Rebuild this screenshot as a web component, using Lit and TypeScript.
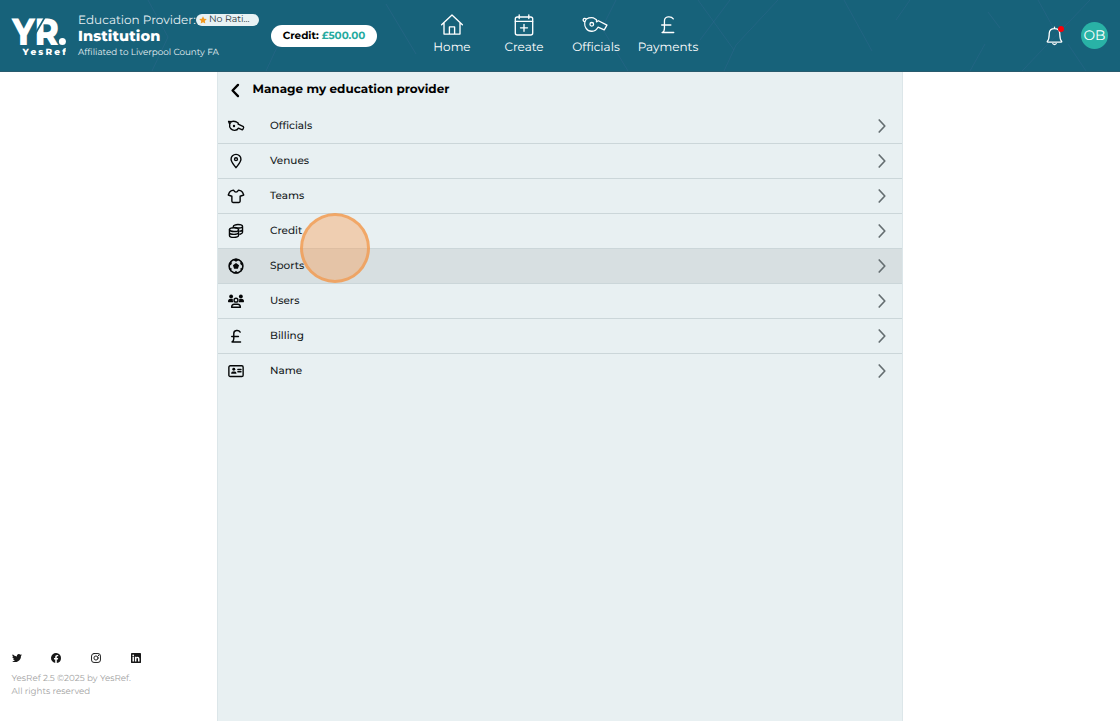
import { LitElement, html, svg, css } from "lit";
import { customElement, property } from "lit/decorators.js";

const whistle = svg`<path d="M3.5 4.2A1.8 1.8 0 1 0 2.6 7.3M4 4.4Q7 2.8 11 3.2L14.4 5.3V7.4L16.4 6.3 25.3 10.9 22.5 15.7 16 13C13 18.5 6.5 18.3 3.6 14.2C1.5 11.2 1.8 7 4 4.4Z"/><circle cx="9.5" cy="10" r="1.9"/>`;
const pound = svg`<path d="M19.5 4.8C17.5 1.8 10.3 1.5 10.3 7V14.5Q10.3 18 7.8 19H20M7.4 11.2H17"/>`;

const icons: Record<string, unknown> = {
  home: svg`<path d="M1.6 11.5 12 1.6 22.4 11.5M4 9.8V20.8H20V9.8M9.4 20.8V13.6H14.6V20.8"/>`,
  create: svg`<rect x="3.3" y="3.2" width="17.4" height="18" rx="2"/><path d="M3.3 7.5H20.7M7.2 1V4.8M16.8 1V4.8M12 10.5V17.5M8.5 14H15.5"/>`,
  whistle,
  pound,
  smallWhistle: svg`<path d="M2.9 8.3 1.2 4.1 5.2 4.6Q8.5 3 12.4 4.6L15.6 6.6V8.2L23.4 12Q24.4 13 22.9 15.5L21.8 16.8 16 14.2C13.6 18.6 7.3 18.4 4.6 15.2C2.7 13 2.3 10.6 2.9 8.3Q3.6 6 5.2 4.6"/><circle class="solid" cx="9.3" cy="11" r="1.8"/>`,
  bell: svg`<path d="M4 18.4C6 16.2 5.8 13.5 6 9.5C6.2 6 8.4 4.1 12 4.1S17.8 6 18 9.5C18.2 13.5 18 16.2 20 18.4Q20.8 19.5 19.6 19.5H4.4Q3.2 19.5 4 18.4ZM12 4V2.4M10 21.3Q12 23.2 14 21.3"/>`,
  pin: svg`<path d="M12 22C9 17.8 4.6 13.8 4.6 9.5A7.4 7.4 0 0 1 19.4 9.5C19.4 13.8 15 17.8 12 22Z"/><circle cx="12" cy="9.3" r="2.2"/>`,
  shirt: svg`<path d="M8.2 3.2 4.5 4.4Q2 5.5 .4 10.5L5.8 12.4V20Q5.8 21.7 7.5 21.7H16.5Q18.2 21.7 18.2 20V12.4L23.6 10.5Q22 5.5 19.5 4.4L15.8 3.2Q12 9.3 8.2 3.2Z"/>`,
  coins: svg`<ellipse cx="9" cy="10" rx="6.8" ry="2.8"/><path d="M2.2 10V18.7C2.2 22.6 15.8 22.6 15.8 18.7V10M2.2 14.3C2.2 18 15.8 18 15.8 14.3M8 6.2V5.2C8 1.4 21.8 1.4 21.8 5.2V14Q21.8 16 18 16.8M10 6.7Q21.8 8.8 21.8 5.2M18 12.3Q21.8 11.4 21.8 9.7"/>`,
  ball: svg`<circle cx="12" cy="12" r="9.4"/><path class="solid" d="M12 7.6 16.2 10.7 14.6 15.6H9.4L7.8 10.7ZM7 3 12 6 17 3 12 1.6ZM2 12.4 6.2 8.9 5.6 4.6 2 8.4ZM22 12.4 17.8 8.9 18.4 4.6 22 8.4ZM4.6 19.6 6.3 15.3 1.8 14.1ZM19.4 19.6 17.7 15.3 22.2 14.1ZM8.3 22 12 18.2 15.7 22Z"/>`,
  users: svg`<circle cx="12" cy="10.7" r="2.9"/><path d="M5.4 21.4Q5.7 16.8 9.3 16.8H14.7Q18.3 16.8 18.6 21.4Z"/><path class="solid" d="M0 12.9Q0 8.7 4 8.7H6.2Q7.7 8.7 7.2 10.5 7 12 8 13.8H.8Q0 13.8 0 12.9ZM24 12.9Q24 8.7 20 8.7H17.8Q16.3 8.7 16.8 10.5 17 12 16 13.8H23.2Q24 13.8 24 12.9Z"/><circle class="solid" cx="4.7" cy="5.1" r="2.9"/><circle class="solid" cx="19.3" cy="5.1" r="2.9"/>`,
  card: svg`<rect x="1.3" y="4.2" width="21.4" height="16" rx="2"/><path d="M14.8 9.7H19.5M14.8 13.2H19.5"/><circle class="solid" cx="8.7" cy="9.4" r="2.2"/><path class="solid" d="M4.6 16.2Q4.8 12.6 7 12.6H10.4Q12.6 12.6 12.8 16.2Z"/>`,
  back: svg`<path d="M16 3 7.3 12 16 21"/>`,
  next: svg`<path d="M7.8 3 16.2 12 7.8 21"/>`,
  star: svg`<path class="solid" d="M12 1 15.4 8.2 23.2 9.2 17.5 14.7 18.9 22.5 12 18.7 5.1 22.5 6.5 14.7 .8 9.2 8.6 8.2Z"/>`,
  twitter: svg`<path class="solid" d="M23.9 4.6a10 10 0 0 1-2.8.8 5 5 0 0 0 2.1-2.7 10 10 0 0 1-3.1 1.2 4.9 4.9 0 0 0-8.4 4.5A14 14 0 0 1 1.6 3.2a4.9 4.9 0 0 0 1.5 6.5 5 5 0 0 1-2.2-.6 4.9 4.9 0 0 0 4 4.9 5 5 0 0 1-2.3.1 4.9 4.9 0 0 0 4.6 3.4A9.9 9.9 0 0 1 0 19.5 14 14 0 0 0 21.5 7.1a10 10 0 0 0 2.4-2.5Z"/>`,
  facebook: svg`<path class="solid" d="M24 12A12 12 0 1 0 10.1 23.9V15.5H7.1V12H10.1V9.4C10.1 6.4 11.9 4.7 14.7 4.7Q16 4.7 17.3 5V8H15.8C14.3 8 13.9 8.9 13.9 9.8V12H17.2L16.7 15.5H13.9V23.9A12 12 0 0 0 24 12Z"/>`,
  instagram: svg`<rect x="1.3" y="1.3" width="21.4" height="21.4" rx="6"/><circle cx="12" cy="12" r="5"/><circle class="solid" cx="18.2" cy="5.8" r="1.4"/>`,
  linkedin: svg`<path class="solid" fill-rule="evenodd" d="M2 0H22Q24 0 24 2V22Q24 24 22 24H2Q0 24 0 22V2Q0 0 2 0ZM3.6 9V20.4H7.1V9ZM5.3 3.3A2.1 2.1 0 1 0 5.3 7.5 2.1 2.1 0 0 0 5.3 3.3ZM9.4 9V20.4H12.9V14.8C12.9 11 16.8 11 16.8 14.8V20.4H20.4V14.1C20.4 8 14.7 7.6 12.8 10.6V9Z"/>`,
};

@customElement("line-icon")
class LineIcon extends LitElement {
  @property() name = "";
  @property() box = "0 0 24 24";
  static styles = css`
    :host { display: block; flex: none; }
    svg { display: block; width: 100%; height: 100%; overflow: visible; fill: none; stroke: currentColor; stroke-width: var(--line, 1.5); stroke-linecap: round; stroke-linejoin: round; }
    .solid { fill: currentColor; stroke: none; }
  `;
  render() {
    return html`<svg viewBox=${this.box} aria-hidden="true">${icons[this.name]}</svg>`;
  }
}

const nav = [
  ["home", "Home", "0 -0.3 24 24"],
  ["create", "Create", "0 -0.8 24 24"],
  ["whistle", "Officials", "1.4 -1.8 25 25"],
  ["pound", "Payments", "1.5 -1.3 25 25"],
];
const rows = [
  ["smallWhistle", "Officials", "0.3 -1 24 24"],
  ["pin", "Venues", "0 0 24 24"],
  ["shirt", "Teams", "0 0 24 24"],
  ["coins", "Credit", "0 0 24 24"],
  ["ball", "Sports", "1 0.8 22 22"],
  ["users", "Users", "0 0 24 24"],
  ["pound", "Billing", "2 -1 23 23"],
  ["card", "Name", "0 0 24 24"],
];

@customElement("app-root")
class AppRoot extends LitElement {
  static styles = css`
    :host { display: flex; flex-direction: column; height: 721px; overflow: hidden; position: relative; background: #fff; color: #14191b; font-family: Montserrat, Inter, sans-serif; white-space: nowrap; text-rendering: geometricPrecision; }
    * { box-sizing: border-box; }
    header { height: 72px; flex: none; display: grid; grid-template-columns: 66px 193px 157px 288px 1fr; color: #fff; background: #17627a; position: relative; border-bottom: 1px solid #285b6e; }
    .pattern { position: absolute; inset: 0; width: 1120px; height: 71px; }
    header > div, nav { position: relative; }
    .logo svg { display: block; width: 66px; height: 60px; fill: #fff; font-family: Montserrat, Inter, sans-serif; }
    .who { padding: 12px 0 0 12px; }
    .line { display: flex; align-items: center; height: 16px; }
    .kind { font-size: 12px; font-weight: 400; line-height: 14px; padding-top: 2px; color: #e6eff2; width: 119px; }
    .rating { display: flex; align-items: center; gap: 2px; width: 63px; height: 12px; padding-left: 3px; flex: none; border-radius: 6px; background: #e8f2f4; color: #29363a; font-size: 9.4px; line-height: 14px; }
    .rating line-icon { width: 8px; height: 8px; color: #f39a20; }
    .org { font-size: 14.5px; font-weight: 800; letter-spacing: .1px; height: 17px; line-height: 17px; }
    .aff { font-size: 8.8px; font-weight: 400; color: #e6eff2; height: 14px; line-height: 16px; }
    .credit { display: flex; padding: 25px 0 0 12px; }
    .pill { height: 22px; width: 106px; border-radius: 11px; background: #fff; color: #000; text-align: center; font-size: 10.4px; line-height: 22px; font-weight: 700; }
    .pill span { color: #25aa9f; }
    nav { display: grid; grid-template-columns: repeat(4, 72px); padding-top: 13px; }
    nav a { display: flex; flex-direction: column; align-items: center; font-size: 12px; font-weight: 450; line-height: 16px; gap: 3px; }
    nav line-icon { width: 24px; height: 24px; --line: 1.35; }
    .account { display: flex; justify-content: flex-end; align-items: center; gap: 16px; padding-right: 12px; }
    .bell { position: relative; }
    .bell line-icon { width: 21px; height: 21px; }
    .dot { position: absolute; right: 1px; top: 1px; width: 6px; height: 6px; border-radius: 50%; background: #fa0009; }
    .avatar { width: 27px; height: 27px; border-radius: 50%; background: #29b2a6; text-align: center; line-height: 28px; font-size: 13.8px; }
    .body { flex: 1; display: grid; grid-template-columns: 217px 686px 217px; }
    aside { display: flex; flex-direction: column; justify-content: flex-end; padding: 0 0 22px 11.5px; color: #a3a3a3; font-size: 8.75px; line-height: 13px; }
    .social { display: flex; gap: 29.8px; padding-bottom: 10px; color: #181818; }
    .social line-icon { width: 10px; height: 10px; --line: 2.3; }
    main { background: #e8f0f2; border: 1px solid #dce6e9; border-width: 0 1px; }
    h1 { display: flex; align-items: center; gap: 10px; height: 37px; margin: 0; padding: 0 0 0 9.5px; color: #000; font-size: 12px; line-height: 14px; font-weight: 700; }
    h1 span { padding-bottom: 1px; }
    h1 line-icon { width: 15px; height: 15px; --line: 3.7; }
    .row { display: grid; grid-template-columns: 42px 1fr 16px; align-items: center; height: 34.94px; padding: 0 12px 0 10px; border-bottom: 1px solid #cbd6d9; font-size: 10.45px; line-height: 13px; font-weight: 500; }
    .row span { padding-bottom: .4px; }
    .row:last-child { border-bottom: 0; height: 34px; }
    .row line-icon { width: 16px; height: 16px; --line: 2.1; color: #050708; }
    .row .next { color: #646d70; --line: 2.5; }
    .active { background: #d7dfe1; }
    .click { position: absolute; left: 300px; top: 213px; width: 70px; height: 70px; border: 3px solid rgba(240, 153, 78, .75); border-radius: 50%; background: rgba(249, 156, 81, .4); }
  `;
  render() {
    return html`
      <header>
        <svg class="pattern" viewBox="0 0 1120 71" fill="none" stroke="#3a6a96" stroke-opacity=".32" aria-hidden="true">
          <path d="M148 0 168 37 152 71M266 71 284 32M386 4 416 54M616 0 602 28 628 71M698 0 734 50M724 71 736 45 778 0M844 0 872 51M896 20 910 0M1038 0 1054 29M1090 0 1022 71M1068 44 1086 71M700 40 730 0M985 44 970 71M1000 28 988 12"/>
        </svg>
        <div class="logo">
          <svg viewBox="0 0 66 60"><text x="12" y="44.5" font-size="38" font-weight="800" textLength="47" lengthAdjust="spacingAndGlyphs">YR</text><circle cx="62.4" cy="41.5" r="3.5"/><path d="M34 36 45 17" stroke="#17627a" stroke-width="1.6"/><text x="22.5" y="55" font-size="9" font-weight="800" textLength="43.5">YesRef</text></svg>
        </div>
        <div class="who">
          <div class="line"><span class="kind">Education Provider:</span><span class="rating"><line-icon name="star"></line-icon>No Rati...</span></div>
          <div class="org">Institution</div>
          <div class="aff">Affiliated to Liverpool County FA</div>
        </div>
        <div class="credit"><div class="pill">Credit: <span>£500.00</span></div></div>
        <nav>${nav.map(([i, t, b]) => html`<a><line-icon name=${i} box=${b}></line-icon>${t}</a>`)}</nav>
        <div class="account"><div class="bell"><line-icon name="bell"></line-icon><i class="dot"></i></div><div class="avatar">OB</div></div>
      </header>
      <div class="body">
        <aside>
          <div class="social">${["twitter", "facebook", "instagram", "linkedin"].map((i) => html`<line-icon name=${i}></line-icon>`)}</div>
          <div>YesRef 2.5 ©2025 by YesRef.</div><div>All rights reserved</div>
        </aside>
        <main>
          <h1><line-icon name="back"></line-icon><span>Manage my education provider</span></h1>
          ${rows.map(([i, t, b]) => html`<div class="row ${t === "Sports" ? "active" : ""}"><line-icon name=${i} box=${b}></line-icon><span>${t}</span><line-icon class="next" name="next"></line-icon></div>`)}
        </main>
      </div>
      <div class="click"></div>
    `;
  }
}
